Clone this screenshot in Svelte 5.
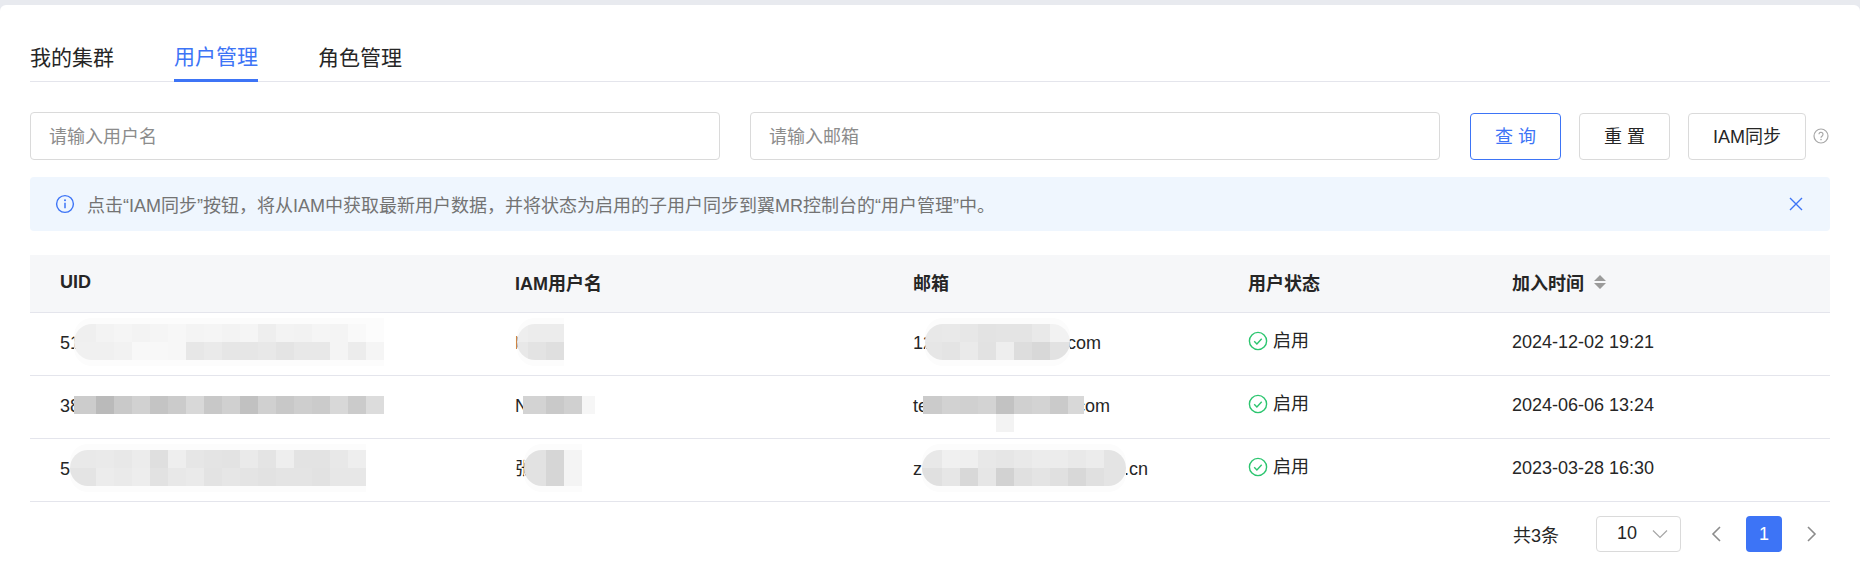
<script>
  const tabs = ["我的集群", "用户管理", "角色管理"];
  let activeTab = $state(1);
  let showAlert = $state(true);

  // mosaic blocks hiding personal data: x = left edge in the cell, w = block widths, rows = greys per row
  const g = (s) => s.split(" ");
  const rows = [
    {
      uid: "51",
      uidMask: { x: 14, y: 12, soft: true, w: [22, ...Array(16).fill(18)], rows: [g("ef f3 f5 f3 f5 f7 f4 f5 f3 f5 ee f3 f2 f5 f4 f9 fc"), g("f0 f0 f2 f8 f8 f7 e7 ea e6 e6 e8 e4 e8 e8 f4 ec f5")] },
      name: "N",
      nameMask: { x: 2, y: 12, soft: true, w: [11, 18, 18], rows: [g("ee ec ec"), g("e8 e3 df")] },
      mailHead: "12",
      mailTail: ".com",
      gap: 129,
      mailMask: { x: 12, y: 12, soft: true, round: true, w: [17, 18, 18, 18, 18, 18, 18, 20], rows: [g("e8 e9 e7 e3 e4 e4 e9 f2"), g("e6 e4 ea e2 ee dd d8 e2")] },
      time: "2024-12-02 19:21",
    },
    {
      uid: "38",
      uidMask: { x: 14, y: 21, w: [22, ...Array(16).fill(18)], rows: [g("cc ba c9 d1 c4 cb d8 c8 d0 c1 d0 c8 ce cb d8 cb dc")] },
      name: "N",
      nameMask: { x: 8, y: 21, w: [23, 18, 18, 13], rows: [g("d3 c9 d0 f6")] },
      mailHead: "te",
      mailTail: ".com",
      gap: 143,
      mailMask: { x: 10, y: 21, w: [19, 18, 18, 18, 18, 18, 18, 18, 16], rows: [g("cb d2 d0 d3 c2 d0 d3 ca d8"), g("ff ff ff ff f3 ff ff ff ff")] },
      time: "2024-06-06 13:24",
    },
    {
      uid: "5",
      uidMask: { x: 10, y: 12, soft: true, w: [26, ...Array(15).fill(18)], rows: [g("e9 ea e8 ec df ee e6 e4 e3 ea e4 ee e3 e3 e8 ee"), g("e4 ec ea ed e2 e8 ea e3 e6 e4 e2 e4 e4 e2 e7 e7")] },
      name: "张",
      nameMask: { x: 9, y: 12, soft: true, w: [22, 18, 18], rows: [g("e2 d6 f4"), g("e2 d6 f4")] },
      mailHead: "z",
      mailTail: ".cn",
      gap: 202,
      mailMask: { x: 9, y: 12, soft: true, round: true, w: [20, 18, 18, 18, 18, 18, 18, 18, 18, 18, 22], rows: [g("e8 f0 ef e8 e6 e9 ec ec e9 ec e4"), g("e0 e6 d8 e6 d2 e0 e4 e0 d8 e0 e4")] },
      time: "2023-03-28 16:30",
    },
  ];
</script>

{#snippet mosaic(m)}
  <div class="mosaic" class:soft={m.soft} class:round={m.round} style="left:{m.x}px;top:{m.y}px">
    {#each m.rows as line}
      <div class="mosaic-row">
        {#each line as grey, i}
          <span style="width:{m.w[i]}px;background:#{grey}{grey}{grey}"></span>
        {/each}
      </div>
    {/each}
  </div>
{/snippet}

<div class="page">
  <div class="card">
    <nav class="tabs">
      {#each tabs as tab, i}
        <button class="tab" class:active={activeTab === i} onclick={() => (activeTab = i)}>{tab}</button>
      {/each}
    </nav>

    <div class="filters">
      <input class="field" placeholder="请输入用户名" />
      <input class="field" placeholder="请输入邮箱" />
      <button class="btn primary">查 询</button>
      <button class="btn">重 置</button>
      <button class="btn sync">IAM同步</button>
      <svg class="help" width="16" height="16" viewBox="0 0 16 16" fill="none">
        <circle cx="8" cy="8" r="7" stroke="#a8a8a8" stroke-width="1.2" />
        <path d="M6 6.3a2 2 0 1 1 3.2 1.6c-.8.6-1.2.9-1.2 1.8" stroke="#a8a8a8" stroke-width="1.2" />
        <circle cx="8" cy="11.6" r=".8" fill="#a8a8a8" />
      </svg>
    </div>

    {#if showAlert}
      <div class="alert">
        <svg width="20" height="20" viewBox="0 0 20 20" fill="none">
          <circle cx="10" cy="10" r="8.4" stroke="#3d74f6" stroke-width="1.4" />
          <path d="M10 8.8v5.4" stroke="#3d74f6" stroke-width="1.5" />
          <circle cx="10" cy="6.2" r="1" fill="#3d74f6" />
        </svg>
        <span class="alert-text">点击“IAM同步”按钮，将从IAM中获取最新用户数据，并将状态为启用的子用户同步到翼MR控制台的“用户管理”中。</span>
        <button class="close" aria-label="关闭" onclick={() => (showAlert = false)}>
          <svg width="14" height="14" viewBox="0 0 14 14" fill="none">
            <path d="M1 1l12 12M13 1L1 13" stroke="#3d74f6" stroke-width="1.4" />
          </svg>
        </button>
      </div>
    {/if}

    <table>
      <colgroup>
        <col class="c1" /><col class="c2" /><col class="c3" /><col class="c4" /><col />
      </colgroup>
      <thead>
        <tr>
          <th>UID</th>
          <th>IAM用户名</th>
          <th>邮箱</th>
          <th>用户状态</th>
          <th>
            <span class="sortable">加入时间
              <svg width="12" height="16" viewBox="0 0 12 16">
                <path d="M6 1L12 7H0zM6 15L0 9h12z" fill="#9b9b9b" />
              </svg>
            </span>
          </th>
        </tr>
      </thead>
      <tbody>
        {#each rows as row}
          <tr>
            <td><div class="cell">{row.uid}{@render mosaic(row.uidMask)}</div></td>
            <td><div class="cell">{row.name}{@render mosaic(row.nameMask)}</div></td>
            <td>
              <div class="cell">
                {row.mailHead}<span class="hidden" style="width:{row.gap}px"></span>{row.mailTail}{@render mosaic(row.mailMask)}
              </div>
            </td>
            <td>
              <span class="status">
                <svg width="20" height="20" viewBox="0 0 20 20" fill="none">
                  <circle cx="10" cy="10" r="8.6" stroke="#2cc56f" stroke-width="1.4" />
                  <path d="M6.2 10.2l2.7 2.7 4.8-5.2" stroke="#2cc56f" stroke-width="1.4" />
                </svg>
                启用
              </span>
            </td>
            <td>{row.time}</td>
          </tr>
        {/each}
      </tbody>
    </table>

    <div class="pager">
      <span class="total">共3条</span>
      <div class="size">
        <span>10</span>
        <svg width="16" height="10" viewBox="0 0 16 10" fill="none">
          <path d="M1 1.5l7 7 7-7" stroke="#a6a6a6" stroke-width="1.2" />
        </svg>
      </div>
      <svg class="arrow" width="12" height="18" viewBox="0 0 12 18" fill="none">
        <path d="M10 2L3 9l7 7" stroke="#8c8c8c" stroke-width="1.6" />
      </svg>
      <span class="page-num">1</span>
      <svg class="arrow" width="12" height="18" viewBox="0 0 12 18" fill="none">
        <path d="M2 2l7 7-7 7" stroke="#8c8c8c" stroke-width="1.6" />
      </svg>
    </div>
  </div>
</div>

<style>
  :global(body) {
    margin: 0;
    background: #e8eaef;
  }

  .page {
    padding-top: 5px;
    height: 577px;
    overflow: hidden;
    font-family: "Liberation Sans", "Noto Sans CJK SC", sans-serif;
    color: #262626;
  }

  .card {
    height: 100%;
    box-sizing: border-box;
    padding: 0 30px;
    background: #fff;
    border-radius: 6px 6px 0 0;
  }

  .tabs {
    display: flex;
    gap: 60px;
    height: 77px;
    box-sizing: border-box;
    padding-top: 35px;
    border-bottom: 1px solid #e4e5ec;
  }

  .tab {
    height: 42px;
    padding: 0 0 7px;
    border: 0;
    background: none;
    font: inherit;
    font-size: 21px;
    line-height: 34px;
    color: #262626;
    cursor: pointer;
  }

  .tab.active {
    color: #3d74f6;
    border-bottom: 3px solid #3d74f6;
  }

  .filters {
    display: flex;
    align-items: center;
    margin-top: 30px;
  }

  .field {
    width: 690px;
    height: 48px;
    box-sizing: border-box;
    margin-right: 30px;
    padding: 2px 18px 0;
    border: 1px solid #dadada;
    border-radius: 4px;
    outline: none;
    font: inherit;
    font-size: 18px;
  }

  .field::placeholder {
    color: #8c8c8c;
  }

  .btn {
    width: 91px;
    height: 47px;
    margin-right: 18px;
    padding: 0 0 2px;
    border: 1px solid #dadada;
    border-radius: 4px;
    background: #fff;
    font: inherit;
    font-size: 18px;
    color: #262626;
    cursor: pointer;
  }

  .btn.primary {
    border-color: #3d74f6;
    color: #3d74f6;
  }

  .btn.sync {
    width: 118px;
    margin-right: 7px;
  }

  .alert {
    display: flex;
    align-items: center;
    height: 54px;
    margin-top: 17px;
    padding: 0 27px 0 25px;
    border-radius: 4px;
    background: #eff6fe;
    font-size: 18px;
    color: #737373;
  }

  .alert-text {
    flex: 1;
    margin-left: 12px;
  }

  .close {
    display: flex;
    padding: 0;
    border: 0;
    background: none;
    cursor: pointer;
  }

  table {
    width: 100%;
    margin-top: 24px;
    border-collapse: collapse;
    table-layout: fixed;
    font-size: 18px;
  }

  .c1 { width: 455px; }
  .c2 { width: 398px; }
  .c3 { width: 335px; }
  .c4 { width: 264px; }

  th {
    height: 57px;
    padding: 0 0 2px 30px;
    box-sizing: border-box;
    background: #f6f7f9;
    border-bottom: 1px solid #e4e5ec;
    text-align: left;
    font-weight: 700;
  }

  td {
    height: 63px;
    padding: 0 0 2px 30px;
    box-sizing: border-box;
    border-bottom: 1px solid #e4e5ec;
  }

  .sortable {
    display: inline-flex;
    align-items: center;
    gap: 10px;
  }

  .cell {
    position: relative;
    height: 24px;
    line-height: 24px;
    white-space: nowrap;
  }

  .hidden {
    display: inline-block;
  }

  .mosaic {
    position: absolute;
    margin-top: -19px;
    overflow: hidden;
  }

  .mosaic.soft {
    border-radius: 18px 0 0 18px;
    box-shadow: 0 -6px 0 #fcfcfc, 0 6px 0 #fcfcfc;
  }

  .mosaic.round {
    border-radius: 18px;
  }

  .mosaic-row {
    display: flex;
  }

  .mosaic-row span {
    display: block;
    height: 18px;
  }

  .status {
    display: inline-flex;
    align-items: center;
    gap: 5px;
    line-height: 24px;
  }

  .pager {
    display: flex;
    align-items: center;
    justify-content: flex-end;
    height: 36px;
    margin-top: 14px;
    padding-right: 12px;
    font-size: 18px;
  }

  .total {
    margin-right: 37px;
  }

  .size {
    display: flex;
    align-items: center;
    justify-content: space-between;
    width: 85px;
    height: 36px;
    box-sizing: border-box;
    margin-right: 29px;
    padding: 0 12px 0 20px;
    border: 1px solid #dadada;
    border-radius: 4px;
  }

  .page-num {
    width: 36px;
    height: 36px;
    margin: 0 24px;
    border-radius: 4px;
    background: #3d74f6;
    color: #fff;
    text-align: center;
    line-height: 36px;
  }
</style>
